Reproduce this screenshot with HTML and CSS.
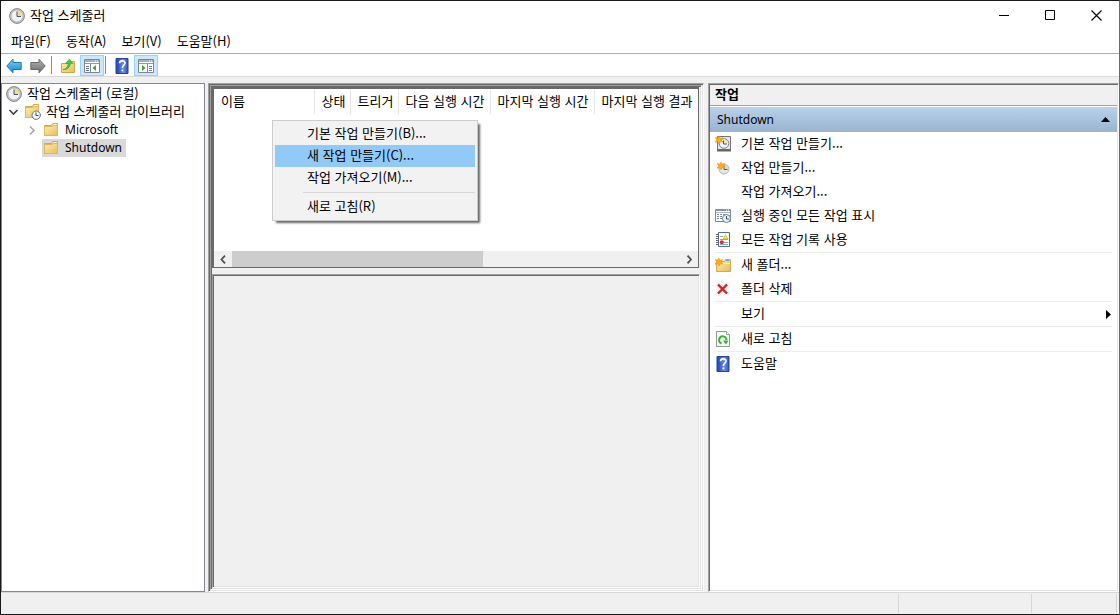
FILE: index.html
```html
<!DOCTYPE html>
<html lang="ko">
<head>
<meta charset="utf-8">
<title>작업 스케줄러</title>
<link rel="stylesheet" href="styles.css">
</head>
<body>
<svg class="defs" aria-hidden="true">
  <defs>
    <linearGradient id="g-folder" x1="0" y1="0" x2="1" y2="1"><stop offset="0" stop-color="#fdeeb0"/><stop offset="1" stop-color="#e8bd58"/></linearGradient>
    <linearGradient id="g-blue" x1="0" y1="0" x2="0" y2="1"><stop offset="0" stop-color="#7fd4f7"/><stop offset="1" stop-color="#1583cf"/></linearGradient>
    <linearGradient id="g-gray" x1="0" y1="0" x2="0" y2="1"><stop offset="0" stop-color="#b5b5b5"/><stop offset="1" stop-color="#6c6c6c"/></linearGradient>
    <linearGradient id="g-help" x1="0" y1="0" x2="1" y2="0"><stop offset="0" stop-color="#2748a8"/><stop offset=".2" stop-color="#2f55c0"/><stop offset=".6" stop-color="#6f93e4"/><stop offset="1" stop-color="#2f50b4"/></linearGradient>
    <symbol id="clock" viewBox="0 0 16 16">
      <circle cx="8" cy="8" r="7.4" fill="#c5c5c5" stroke="#858585"/>
      <circle cx="8" cy="8" r="5.8" fill="#edf3f8" stroke="#b4b4b4" stroke-width=".6"/>
      <path d="M8 8V2.5A5.5 5.5 0 0 1 13.5 8Z" fill="#f6dc93"/>
      <path d="M8 3.5V8.5H12" fill="none" stroke="#47576a" stroke-width="1"/>
    </symbol>
    <symbol id="folder" viewBox="0 0 16 16">
      <path d="M1.5 3.5h7l1-2h5v12h-13z" fill="#f4d486" stroke="#d5a94c"/>
      <path d="M10.500 2h3v1h-3z" fill="#fff"/>
      <path d="M1.5 4.5h8l1-1h4v10h-13z" fill="url(#g-folder)" stroke="#dfb65c"/>
    </symbol>
    <symbol id="folder-clock" viewBox="0 0 17 16">
      <path d="M1.500 2.500h7l1-2h5v13h-13z" fill="#f4d486" stroke="#d5a94c"/>
      <path d="M10.500 1h3v1h-3z" fill="#fff"/>
      <path d="M1.500 3.500h8l1-1h4v11h-13z" fill="url(#g-folder)" stroke="#dfb65c"/>
      <circle cx="12.200" cy="11.200" r="4.200" fill="#edf6fb" stroke="#60717d"/>
      <path d="M12 8.500v3h2.500" fill="none" stroke="#34566a"/>
    </symbol>
    <symbol id="back" viewBox="0 0 16 16"><path d="M.8 8 7 1.2V4.500h8.200v7H7v3.300Z" fill="url(#g-blue)" stroke="#1878b5" stroke-linejoin="round"/></symbol>
    <symbol id="forward" viewBox="0 0 16 16"><path d="M15.2 8 9 1.2V4.500H.8v7H9v3.300Z" fill="url(#g-gray)" stroke="#686868" stroke-linejoin="round"/></symbol>
    <symbol id="folder-up" viewBox="0 0 16 16">
      <path d="M1.5 5.5h7l1-2h5v11h-13z" fill="url(#g-folder)" stroke="#cfa64c"/>
      <path d="M3 11.5C7 11 8 8 8 5.5H5.5L9.3 1.2 13 5.5h-2.6C10 9 7.5 12 3 11.5Z" fill="#4ac83e" stroke="#2e9b27" stroke-width=".6"/>
    </symbol>
    <symbol id="pane-left" viewBox="0 0 16 16">
      <path d="M.5 1.500h15v13H.5z" fill="#fff" stroke="#7b8794"/>
      <path d="M1 2h14v2H1z" fill="#a5aeb9"/><path d="M11 3h1m1 0h1" stroke="#fff"/>
      <path d="M1 5h14v1H1z" fill="#8d98a5"/><path d="M6.500 6v8" stroke="#7b8794"/>
      <path d="M2 8.500h3M2 10.500h3M2 12.500h3" stroke="#69788b"/>
      <path d="M12 7v6L8.500 10Z" fill="#38aa29"/>
    </symbol>
    <symbol id="pane-right" viewBox="0 0 16 16">
      <path d="M.5 1.500h15v13H.5z" fill="#fff" stroke="#7b8794"/>
      <path d="M1 2h14v2H1z" fill="#a5aeb9"/><path d="M11 3h1m1 0h1" stroke="#fff"/>
      <path d="M1 5h14v1H1z" fill="#8d98a5"/><path d="M9.500 6v8" stroke="#7b8794"/>
      <path d="M11 8.500h3M11 10.500h3M11 12.500h3" stroke="#69788b"/>
      <path d="M4 7v6l3.500-3Z" fill="#38aa29"/>
    </symbol>
    <symbol id="help" viewBox="0 0 13 16">
      <path d="M.5.5h12v15H.5z" fill="url(#g-help)" stroke="#2343a0"/>
      <path d="M4 5.2C4 2.2 9.6 2.1 9.6 5c0 2.1-2.8 2.2-2.8 5" fill="none" stroke="#fff" stroke-width="1.6"/>
      <path d="M6 11.500h1.700v1.700H6z" fill="#fff"/>
    </symbol>
    <symbol id="spark" viewBox="0 0 8 8"><path d="M4 0 4.900 2.400 7.800 1.600 6.100 4 8 6 5.200 5.800 4 8 2.900 5.800 0 6.200 1.700 4 .2 1.500 3 2.300Z" fill="#ffab1b" stroke="#e98a09" stroke-width=".5"/></symbol>
    <symbol id="basic-task" viewBox="0 0 16 16">
      <path d="M2.500.5h13v13h-13z" fill="#e9e6e2" stroke="#79716d"/><path d="M2 14.500h14" stroke="#6a625f" stroke-width="2"/>
      <circle cx="9" cy="7.500" r="4.800" fill="#f0f6ef" stroke="#718899"/><path d="M9 7.500V3.500a4 4 0 0 1 4 4Z" fill="#f4e2a3"/><path d="M8.500 4.500V8H12" fill="none" stroke="#385a72"/>
      <use href="#spark" width="8" height="8"/>
    </symbol>
    <symbol id="new-task" viewBox="0 0 16 16">
      <circle cx="9" cy="9" r="5" fill="#dce9f0" stroke="#a9b8c4"/><path d="M9 9V4.500A4.500 4.500 0 0 1 13.500 9Z" fill="#f6d789"/><path d="M9 5.500V9.500h3.500" fill="none" stroke="#3f5f78"/>
      <use href="#spark" x="2" y="2" width="8" height="8"/>
    </symbol>
    <symbol id="running" viewBox="0 0 16 16">
      <path d="M.5 1.500h15v12H.5z" fill="#fff" stroke="#7c8793"/><path d="M1 1h14v2H1z" fill="#8592a3"/><path d="M11 2h1m1 0h1" stroke="#fff"/><path d="M1 4.500h14" stroke="#a9b2bd"/>
      <path d="M2 6.500h9M2 8.500h6M2 10.500h5" stroke="#7b8795" stroke-dasharray="2 1"/>
      <circle cx="11.500" cy="10.500" r="4" fill="#e8f2f6" stroke="#6c8090"/><path d="M11.500 8v3H14" fill="none" stroke="#30566d"/>
    </symbol>
    <symbol id="history" viewBox="0 0 16 16">
      <path d="M3.500.5h11v14h-11z" fill="#fff" stroke="#4f6ea5"/><path d="M1 2.500h3M1 4.500h3M1 6.500h3M1 8.500h3M1 10.500h3M1 12.500h3" stroke="#5e6570"/>
      <path d="M5 4.500h3M5 7.500h8M9 10.500h4M5 12.500h8" stroke="#8ba4bd"/><path d="M10.500 2.500 13 7H8Z" fill="#ffe229" stroke="#d8af17" stroke-width=".6"/><circle cx="6.800" cy="10.300" r="2" fill="#d9292b"/>
    </symbol>
    <symbol id="new-folder" viewBox="0 0 16 16">
      <path d="M1.500 4.500h8l1-2h5v12h-14z" fill="url(#g-folder)" stroke="#d5a94c"/><path d="M11 3.500h3" stroke="#5ba3d0"/><path d="M2 6.500h13" stroke="#fff0bf"/>
      <use href="#spark" y="1" width="8" height="8"/>
    </symbol>
    <symbol id="delete" viewBox="0 0 16 16"><path d="M1 1h13v14H1z" fill="#f5f5f5"/><path d="m3 3.500 9 9M12 3.500l-9 9" fill="none" stroke="#d51f22" stroke-width="2.400"/></symbol>
    <symbol id="refresh" viewBox="0 0 16 16">
      <path d="M1.500.5h10l3 3v12h-13z" fill="#f7faf6" stroke="#8d9996"/><path d="M11.500.5v3h3" fill="#fff" stroke="#9da7a4"/>
      <path d="M6.500 12.500A3.700 3.700 0 1 1 11.500 9" fill="none" stroke="#35b32b" stroke-width="1.900"/><path d="M8 9.500h5.500L11 13.500Z" fill="#35b32b"/>
    </symbol>
  </defs>
</svg>

<div class="window">
  <header class="titlebar">
    <svg class="icon"><use href="#clock"/></svg>
    <h1 class="title">작업 스케줄러</h1>
    <div class="window-controls">
      <button class="window-button" aria-label="최소화"><svg class="glyph" viewBox="0 0 11 11"><path d="M0 5.500h10" stroke="#000"/></svg></button>
      <button class="window-button" aria-label="최대화"><svg class="glyph" viewBox="0 0 11 11"><path d="M.5.5h9v9h-9z" fill="none" stroke="#000"/></svg></button>
      <button class="window-button" aria-label="닫기"><svg class="glyph" viewBox="0 0 11 11"><path d="m.5.5 10 10M10.500.5l-10 10" stroke="#000" stroke-width="1.100"/></svg></button>
    </div>
  </header>
  <nav class="menubar">
    <button class="menu">파일(F)</button><button class="menu">동작(A)</button><button class="menu">보기(V)</button><button class="menu">도움말(H)</button>
  </nav>
  <div class="toolbar">
    <button class="tool" aria-label="뒤로"><svg class="icon"><use href="#back"/></svg></button>
    <button class="tool" aria-label="앞으로"><svg class="icon"><use href="#forward"/></svg></button>
    <span class="tool-line"></span>
    <button class="tool" aria-label="위로"><svg class="icon"><use href="#folder-up"/></svg></button>
    <button class="tool tool-on" aria-label="콘솔 트리 표시"><svg class="icon"><use href="#pane-left"/></svg></button>
    <span class="tool-line"></span>
    <button class="tool" aria-label="도움말"><svg class="icon"><use href="#help"/></svg></button>
    <button class="tool tool-on" aria-label="작업 창 표시"><svg class="icon"><use href="#pane-right"/></svg></button>
  </div>

  <main class="content">
    <aside class="tree">
      <div class="node"><svg class="icon"><use href="#clock"/></svg><span class="node-label">작업 스케줄러 (로컬)</span></div>
      <div class="node"><svg class="chevron" viewBox="0 0 16 16"><path d="m3.500 6 4 4 4-4" fill="none" stroke="#404040" stroke-width="1.600"/></svg><svg class="icon icon-wide"><use href="#folder-clock"/></svg><span class="node-label">작업 스케줄러 라이브러리</span></div>
      <div class="node node-child"><svg class="chevron" viewBox="0 0 16 16"><path d="m6 4.500 4 4-4 4" fill="none" stroke="#a6a6a6" stroke-width="1.600"/></svg><span class="node-body"><svg class="icon"><use href="#folder"/></svg><span class="node-label latin">Microsoft</span></span></div>
      <div class="node node-child"><span class="chevron"></span><span class="node-body selected"><svg class="icon"><use href="#folder"/></svg><span class="node-label latin">Shutdown</span></span></div>
    </aside>

    <section class="center sunken">
      <div class="center-inner sunken">
        <div class="list-pane">
          <table class="tasks">
            <colgroup><col class="col-name"><col class="col-state"><col class="col-trigger"><col class="col-next"><col class="col-last"><col></colgroup>
            <thead><tr><th>이름</th><th>상태</th><th>트리거</th><th>다음 실행 시간</th><th>마지막 실행 시간</th><th>마지막 실행 결과</th></tr></thead>
          </table>
          <div class="scrollbar">
            <button class="scroll-button" aria-label="왼쪽"><svg class="arrow" viewBox="0 0 8 9"><path d="M6 .7 2.500 4.500 6 8.300" fill="none" stroke="#505050" stroke-width="1.800"/></svg></button>
            <div class="scroll-track"><div class="scroll-thumb"></div></div>
            <button class="scroll-button" aria-label="오른쪽"><svg class="arrow" viewBox="0 0 8 9"><path d="M2.500.7 6 4.500 2.500 8.300" fill="none" stroke="#505050" stroke-width="1.800"/></svg></button>
          </div>
          <div class="context-menu" role="menu">
            <button class="context-item" role="menuitem">기본 작업 만들기(B)...</button>
            <button class="context-item highlighted" role="menuitem">새 작업 만들기(C)...</button>
            <button class="context-item" role="menuitem">작업 가져오기(M)...</button>
            <div class="context-line"></div>
            <button class="context-item" role="menuitem">새로 고침(R)</button>
          </div>
        </div>
        <div class="detail-pane sunken"></div>
      </div>
    </section>

    <aside class="actions sunken">
      <h2 class="actions-title">작업</h2>
      <button class="group latin">Shutdown<svg class="triangle" viewBox="0 0 9 9"><path d="M0 7 4.500 2 9 7Z"/></svg></button>
      <div class="action-group">
        <button class="action"><svg class="icon"><use href="#basic-task"/></svg><span class="action-label">기본 작업 만들기...</span></button>
        <button class="action"><svg class="icon"><use href="#new-task"/></svg><span class="action-label">작업 만들기...</span></button>
        <button class="action"><span class="icon"></span><span class="action-label">작업 가져오기...</span></button>
        <button class="action"><svg class="icon"><use href="#running"/></svg><span class="action-label">실행 중인 모든 작업 표시</span></button>
        <button class="action"><svg class="icon"><use href="#history"/></svg><span class="action-label">모든 작업 기록 사용</span></button>
      </div>
      <div class="action-group">
        <button class="action"><svg class="icon"><use href="#new-folder"/></svg><span class="action-label">새 폴더...</span></button>
        <button class="action"><svg class="icon"><use href="#delete"/></svg><span class="action-label">폴더 삭제</span></button>
      </div>
      <div class="action-group">
        <button class="action"><span class="icon"></span><span class="action-label">보기</span><svg class="triangle" viewBox="0 0 9 9"><path d="M3 0 8 4.500 3 9Z"/></svg></button>
      </div>
      <div class="action-group">
        <button class="action"><svg class="icon"><use href="#refresh"/></svg><span class="action-label">새로 고침</span></button>
      </div>
      <div class="action-group">
        <button class="action"><svg class="icon"><use href="#help"/></svg><span class="action-label">도움말</span></button>
      </div>
    </aside>
  </main>

  <footer class="statusbar"><div class="status-main"></div><div class="status-mid"></div><div class="status-end"></div></footer>
</div>
</body>
</html>
```
FILE: styles.css
```css
* { box-sizing: border-box; }

body {
  margin: 0;
  background: #f0f0f0;
  color: #000;
  font: 13px/18px "Noto Sans CJK KR", "Noto Sans", sans-serif;
}

button {
  margin: 0;
  padding: 0;
  border: 0;
  background: none;
  color: inherit;
  font: inherit;
  text-align: left;
  white-space: nowrap;
}

.defs { position: absolute; width: 0; height: 0; }
.icon { flex: none; width: 16px; height: 16px; }
.icon-wide { width: 17px; }

.window {
  display: flex;
  flex-direction: column;
  min-height: 100vh;
  border: 1px solid #18171c;
  border-right-color: #6b6b6b;
}

/* Title, menus and tools */
.titlebar {
  display: flex;
  align-items: center;
  height: 29px;
  padding-left: 8px;
  background: #fff;
}
.title { flex: 1; margin: 0; padding: 0 0 2px 5px; font-size: 13px; font-weight: 400; }
.window-controls { display: flex; }
.window-button { display: grid; place-items: center; width: 46px; height: 28px; }
.glyph { width: 11px; height: 11px; }

.menubar {
  display: flex;
  gap: 15px;
  height: 24px;
  padding: 0 10px 2px;
  border-bottom: 1px solid #a9acb8;
  background: #fff;
}

.toolbar {
  display: flex;
  align-items: flex-end;
  height: 23px;
  padding-left: 1px;
  border-bottom: 1px solid #d9d9d9;
  background: #fff;
}
.tool { display: grid; place-items: center; width: 24px; height: 21px; }
.tool-on { border: 1px solid #99d1ff; background: #cce8ff; }
.tool-line { width: 1px; height: 18px; margin: 0 4px 2px 1px; background: #8c8c8c; }

.content { display: flex; flex: 1; padding-top: 6px; }

.sunken {
  padding: 1px;
  border: 1px solid;
  border-color: #a0a0a0 #fff #fff #a0a0a0;
  box-shadow: inset 1px 1px #696969, inset -1px -1px #e3e3e3;
}

/* Console tree */
.tree {
  flex: none;
  width: 204px;
  padding: 1px 4px;
  border: 1px solid #828790;
  background: #fff;
}
.node { display: flex; align-items: center; height: 18px; white-space: nowrap; }
.node-label { padding: 0 0 2px 5px; }
.chevron { flex: none; width: 16px; height: 16px; margin-right: 2px; }
.node-child { padding-left: 18px; }
.node-body { display: flex; align-items: center; height: 18px; padding: 0 4px 0 1px; }
.selected { background: #d9d9d9; }

.latin { padding: 0 0 0 6px; font: 12px/18px "Noto Sans", sans-serif; }

/* Task list and details */
.center { display: flex; flex: 1; min-width: 0; margin: 0 4px 0 3px; }
.center-inner { display: flex; flex: 1; flex-direction: column; gap: 6px; min-width: 0; }

.list-pane {
  position: relative;
  display: flex;
  flex-direction: column;
  height: 181px;
  margin-right: 1px;
  border: 1px solid #696969;
  border-width: 2px 1px 1px 2px;
  background: #fff;
}
.tasks { width: 100%; border-collapse: collapse; table-layout: fixed; }
.tasks th {
  height: 25px;
  padding: 0 0 2px 7px;
  border-right: 1px solid #e5e5e5;
  font-weight: 400;
  text-align: left;
  white-space: nowrap;
}
.tasks th:last-child { border-right: 0; }
.col-name { width: 100px; }
.col-state { width: 36px; }
.col-trigger { width: 48px; }
.col-next { width: 92px; }
.col-last { width: 104px; }

.scrollbar { display: flex; height: 16px; margin-top: auto; background: #f0f0f0; }
.scroll-button { display: grid; place-items: center; width: 18px; }
.arrow { width: 8px; height: 9px; }
.scroll-track { flex: 1; }
.scroll-thumb { width: 56%; height: 100%; background: #cdcdcd; }

.context-menu {
  position: absolute;
  top: 31px;
  left: 58px;
  width: 206px;
  padding: 2px;
  border: 1px solid #ccc;
  background: #f2f2f2;
  box-shadow: 3px 3px 2px -1px rgba(0, 0, 0, .6);
}
.context-item { display: block; width: 100%; height: 22px; padding: 0 0 2px 32px; }
.highlighted { background: #91c9f7; }
.context-line { height: 7px; margin-left: 28px; padding-top: 3px; }
.context-line::before { content: ""; display: block; height: 1px; background: #d7d7d7; }

.detail-pane { flex: 1; }

/* Actions */
.actions { flex: none; width: 411px; background: #fff; }
.actions-title {
  height: 21px;
  margin: 0 0 1px;
  padding-left: 5px;
  border-bottom: 1px solid #a0a0a0;
  background: #f0f0f0;
  font-size: 13px;
  font-weight: 700;
}
.group {
  display: flex;
  align-items: center;
  width: 100%;
  height: 25px;
  padding: 0 7px;
  background: linear-gradient(#b9d1ea, #99b4d1);
}
.triangle { width: 9px; height: 9px; margin-left: auto; }
.action-group { margin: 0 5px; }
.action-group + .action-group { border-top: 1px solid #ececec; }
.action { display: flex; align-items: center; gap: 10px; width: 100%; height: 24px; }
.action-label { padding-bottom: 2px; }

.statusbar { display: flex; height: 22px; padding: 1px 2px 1px 0; border-top: 1px solid #d7d7d7; }
.status-main { flex: 1; border-right: 1px solid #d7d7d7; }
.status-mid { width: 133px; border-right: 1px solid #d7d7d7; }
.status-end { width: 85px; border-right: 1px solid #d7d7d7; }
```
